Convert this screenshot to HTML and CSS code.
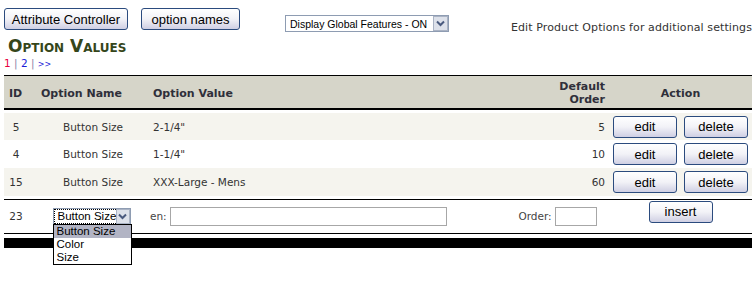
FILE: index.html
```html
<!DOCTYPE html>
<html lang="en">
<head>
    <meta charset="UTF-8">
    <title>Option Values</title>
    <link rel="stylesheet" href="styles.css">
</head>
<body>
    <div class="toolbar">
        <button class="xp-btn btn-attr">Attribute Controller</button>
        <button class="xp-btn btn-names">option names</button>
        <span class="combo global">
            <select>
                <option>Display Global Features - ON</option>
                <option>Display Global Features - OFF</option>
            </select>
            <span class="combo-arrow">
                <svg width="9" height="7" viewBox="0 0 9 7"><path d="M1 1.5 L4.5 5 L8 1.5" fill="none" stroke="#4a5a7e" stroke-width="2"/></svg>
            </span>
        </span>
        <span class="note">Edit Product Options for additional settings</span>
    </div>

    <h1 class="page-title">Option Values</h1>
    <div class="pager">
        <span class="current">1</span> <span class="sep">|</span> <a href="#">2</a> <span class="sep">|</span> <a href="#" class="next">&gt;&gt;</a>
    </div>

    <table class="values">
        <colgroup>
            <col class="c-id">
            <col class="c-name">
            <col>
            <col class="c-order">
            <col class="c-action">
        </colgroup>
        <thead>
            <tr>
                <th class="id">ID</th>
                <th>Option Name</th>
                <th>Option Value</th>
                <th class="order">Default<br>Order</th>
                <th class="action">Action</th>
            </tr>
        </thead>
        <tbody>
            <tr class="alt first">
                <td class="id">5</td>
                <td class="name">Button Size</td>
                <td>2-1/4"</td>
                <td class="order">5</td>
                <td class="action"><button class="xp-btn small">edit</button><button class="xp-btn small">delete</button></td>
            </tr>
            <tr>
                <td class="id">4</td>
                <td class="name">Button Size</td>
                <td>1-1/4"</td>
                <td class="order">10</td>
                <td class="action"><button class="xp-btn small">edit</button><button class="xp-btn small">delete</button></td>
            </tr>
            <tr class="alt">
                <td class="id">15</td>
                <td class="name">Button Size</td>
                <td>XXX-Large - Mens</td>
                <td class="order">60</td>
                <td class="action"><button class="xp-btn small">edit</button><button class="xp-btn small">delete</button></td>
            </tr>
        </tbody>
        <tbody class="insert">
            <tr>
                <td class="id">23</td>
                <td class="name">
                    <span class="combo option-pick">
                        <span class="combo-text">Button Size</span>
                        <span class="combo-arrow">
                            <svg width="9" height="7" viewBox="0 0 9 7"><path d="M1 1.5 L4.5 5 L8 1.5" fill="none" stroke="#4a5a7e" stroke-width="2"/></svg>
                        </span>
                        <ul class="combo-list">
                            <li class="selected">Button Size</li>
                            <li>Color</li>
                            <li>Size</li>
                        </ul>
                    </span>
                </td>
                <td class="value-cell"><label class="lbl">en:</label> <input type="text" class="txt value-input"></td>
                <td class="order"><label class="lbl">Order:</label> <input type="text" class="txt order-input"></td>
                <td class="action"><button class="xp-btn small">insert</button></td>
            </tr>
        </tbody>
    </table>
    <div class="footer-bar"></div>
</body>
</html>
```

FILE: styles.css
```css
body {
    margin: 0;
    padding: 8px 4px 0 4px;
    min-height: 100vh;
    box-sizing: border-box;
    font-family: "DejaVu Sans", Verdana, sans-serif;
    font-size: 10px;
    color: #333;
    background: #fff;
}
.xp-btn {
    font-family: "Liberation Sans", Arial, sans-serif;
    font-size: 13px;
    color: #000;
    height: 22px;
    padding: 0 6px;
    border: 1px solid #2b4b7e;
    border-radius: 3px;
    background: linear-gradient(#ffffff, #f2f2f7 50%, #cfcfe3);
    cursor: pointer;
}
.btn-attr { width: 124px; }
.btn-names { width: 99px; }
.toolbar {
    display: flex;
    align-items: flex-start;
    height: 30px;
}
.toolbar .xp-btn + .xp-btn {
    margin-left: 13px;
}
.combo {
    position: relative;
    display: inline-flex;
    align-items: center;
    height: 17px;
    border: 1px solid #8e9cb2;
    background: #fff;
    box-sizing: border-box;
}
.combo select {
    appearance: none;
    border: 0;
    background: transparent;
    font-family: "Liberation Sans", Arial, sans-serif;
    font-size: 10.5px;
    color: #000;
    width: 100%;
    padding: 0 14px 0 4px;
    height: 15px;
    outline: none;
}
.combo-arrow {
    position: absolute;
    right: 0;
    top: 0;
    width: 15px;
    height: 15px;
    box-sizing: border-box;
    border: 1px solid #aab3c4;
    background: #dde1ea;
    display: flex;
    align-items: center;
    justify-content: center;
}
.global {
    margin-left: 45px;
    margin-top: 7px;
    width: 164px;
}
.note {
    margin-left: auto;
    margin-top: 13px;
    font-size: 11px;
    color: #333;
    letter-spacing: 0.1px;
}
.page-title {
    margin: -2px 0 0 4px;
    font-size: 17px;
    font-variant: small-caps;
    font-weight: bold;
    color: #35461a;
    line-height: 20px;
}
.pager {
    height: 19px;
    line-height: 14px;
    font-size: 10.5px;
}
.pager .current {
    color: #e8003c;
}
.pager .sep {
    color: #8a84a8;
}
.pager a {
    color: #1c1cd8;
    text-decoration: none;
}
.pager .next {
    font-size: 8px;
}
.values {
    width: 100%;
    border-collapse: separate;
    border-spacing: 0;
    table-layout: fixed;
    border-top: 1px solid #000;
    font-size: 10.5px;
}
.c-id { width: 33px; }
.c-name { width: 112px; }
.c-order { width: 100px; }
.c-action { width: 143px; }
.values th {
    background: #d6d5c9;
    font-size: 11px;
    font-weight: bold;
    color: #2f2f3a;
    text-align: left;
    padding: 4px 4px 2px 4px;
    line-height: 13px;
    border-bottom: 2px solid #000;
}
.values th.id {
    padding-left: 5px;
}
.values th.order {
    text-align: right;
}
.values th.action {
    text-align: center;
}
.values td {
    padding: 0 4px;
    height: 28px;
    vertical-align: middle;
}
.values tr.first td {
    border-top: 3px solid #fff;
    height: 27px;
}
.values tr.alt td {
    background: #f5f4ee;
}
.values td.id {
    text-align: center;
    padding: 0 9px 0 0;
}
.values td.name {
    text-align: center;
}
.values td.order {
    text-align: right;
}
.values td.action {
    text-align: center;
    padding: 0;
    white-space: nowrap;
}
.xp-btn.small {
    width: 64px;
    padding: 0;
}
.values td.action .xp-btn + .xp-btn {
    margin-left: 7px;
}
.insert tr td {
    border-top: 3px solid #fff;
    border-bottom: 1px solid #000;
    box-shadow: inset 0 1px 0 #000;
    height: 34px;
}
.values td.value-cell {
    padding-left: 1px;
}
.option-pick {
    width: 78px;
    height: 17px;
    margin-right: 3px;
    text-align: left;
    vertical-align: middle;
}
.option-pick .combo-arrow {
    width: 14px;
}
.combo-text {
    font-family: "Liberation Sans", Arial, sans-serif;
    font-size: 11.5px;
    color: #000;
    white-space: nowrap;
    margin: 0 0 0 1px;
    padding: 0 2px 0 3px;
    width: 57px;
    line-height: 13px;
    outline: 1px dotted #000;
}
.combo-list {
    position: absolute;
    top: 15px;
    left: -1px;
    width: 77px;
    margin: 0;
    padding: 0;
    list-style: none;
    border: 1px solid #000;
    background: #fff;
    font-family: "Liberation Sans", Arial, sans-serif;
    font-size: 11.5px;
    color: #000;
    z-index: 2;
}
.combo-list li {
    height: 13px;
    line-height: 13px;
    padding: 0 3px;
    white-space: nowrap;
}
.combo-list li.selected {
    background: #b2b4c4;
}
.lbl {
    color: #444;
}
.txt {
    height: 19px;
    box-sizing: border-box;
    border: 1px solid #a7a7a7;
    vertical-align: middle;
}
.value-input {
    width: 277px;
}
.order-input {
    width: 42px;
    margin-right: 8px;
}
.insert td.action .xp-btn {
    vertical-align: top;
    margin-top: -9px;
}
.footer-bar {
    height: 10px;
    background: #000;
    margin-top: 4px;
}
```
